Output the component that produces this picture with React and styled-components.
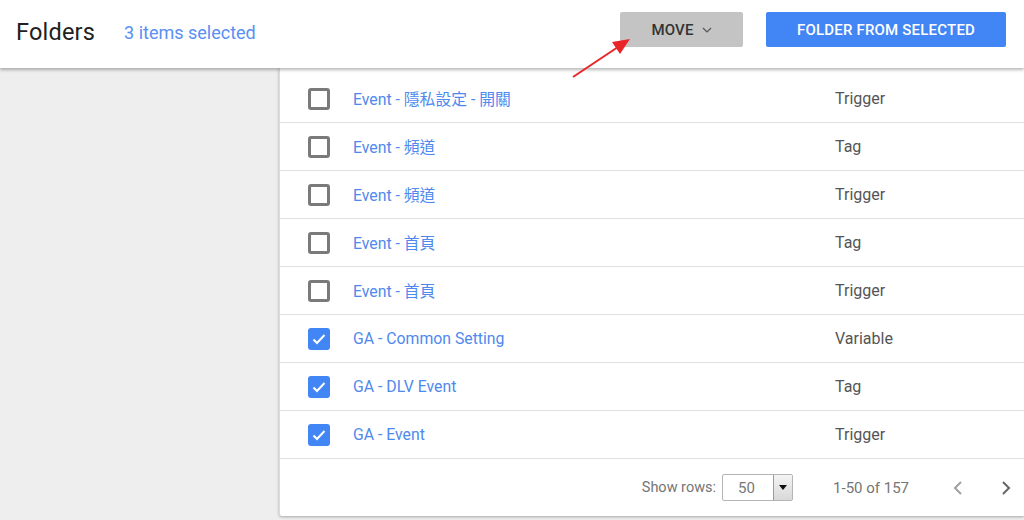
import React from "react";
import styled, { createGlobalStyle } from "styled-components";

const GlobalStyle = createGlobalStyle`
  html, body {
    margin: 0;
    padding: 0;
    background: #eeeeee;
    font-family: Roboto, "Noto Sans CJK TC", sans-serif;
  }
`;

const Page = styled.div`
  position: relative;
  width: 1024px;
  height: 520px;
  overflow: hidden;
  background: #eeeeee;
`;

const Header = styled.header`
  position: relative;
  z-index: 2;
  height: 68px;
  background: #fff;
  box-shadow: 0 2px 3px rgba(0, 0, 0, 0.28);
  display: flex;
  align-items: center;
  padding: 0 18px 4px 16px;
  box-sizing: border-box;
`;

const Title = styled.h1`
  margin: 0;
  font-size: 23.5px;
  font-weight: 400;
  color: #212121;
  letter-spacing: 0.2px;
`;

const Selected = styled.span`
  margin-left: 29px;
  font-size: 18px;
  color: #5a8ff2;
  flex: 1;
`;

const Button = styled.button`
  height: 35px;
  margin-bottom: 5px;
  border: none;
  border-radius: 2px;
  font-family: Roboto, sans-serif;
  font-size: 15px;
  font-weight: 500;
  letter-spacing: 0.2px;
  display: flex;
  align-items: center;
  justify-content: center;
  gap: 8px;
  width: ${(p) => p.width}px;
  background: ${(p) => (p.primary ? "#4285f4" : "#c4c4c4")};
  color: ${(p) => (p.primary ? "#fff" : "#333")};
  margin-left: ${(p) => p.gap || 0}px;
`;

const Body = styled.div`
  display: flex;
  height: calc(520px - 68px);
`;

const Sidebar = styled.div`
  width: 279px;
  flex-shrink: 0;
`;

const Card = styled.div`
  flex: 1;
  background: #fff;
  height: 448px;
  padding-top: 7px;
  box-sizing: border-box;
  border-left: 1px solid #dcdcdc;
  border-radius: 0 0 0 3px;
  box-shadow: 0 1px 3px rgba(0, 0, 0, 0.3);
  display: flex;
  flex-direction: column;
`;

const Row = styled.div`
  height: 48px;
  flex-shrink: 0;
  box-sizing: border-box;
  border-bottom: 1px solid #e0e0e0;
  display: flex;
  align-items: center;
  padding-left: 28px;
`;

const Box = styled.span`
  width: 22px;
  height: 22px;
  box-sizing: border-box;
  border-radius: 3px;
  border: ${(p) => (p.checked ? "none" : "3px solid #7a7a7a")};
  background: ${(p) => (p.checked ? "#4285f4" : "transparent")};
  display: flex;
  align-items: center;
  justify-content: center;
  flex-shrink: 0;
`;

const Name = styled.span`
  margin-left: 23px;
  width: 482px;
  font-size: 15.8px;
  color: #4f89ee;
`;

const Type = styled.span`
  font-size: 16px;
  color: #555;
`;

const Footer = styled.div`
  height: 58px;
  display: flex;
  align-items: center;
  justify-content: flex-end;
  padding-right: 2px;
  color: #757575;
  font-size: 15px;
`;

const Label = styled.span`
  font-size: 14.5px;
  margin-right: 6px;
`;

const Select = styled.div`
  width: 71px;
  height: 27px;
  box-sizing: border-box;
  border: 1px solid #b5b5b5;
  border-radius: 2px;
  display: flex;
  align-items: stretch;
`;

const SelectValue = styled.span`
  flex: 1;
  display: flex;
  align-items: center;
  padding-left: 15px;
  font-size: 15px;
  color: #777;
`;

const SelectBtn = styled.span`
  width: 18px;
  border-left: 1px solid #9a9a9a;
  background: linear-gradient(#f4f4f4, #d8d8d8);
  display: flex;
  align-items: center;
  justify-content: center;
  &::after {
    content: "";
    border-left: 4px solid transparent;
    border-right: 4px solid transparent;
    border-top: 5px solid #111;
  }
`;

const Range = styled.span`
  margin-left: 40px;
  margin-right: 33px;
`;

const Nav = styled.span`
  width: 32px;
  display: flex;
  justify-content: center;
  margin-left: ${(p) => p.gap || 0}px;
`;

const Arrow = styled.svg`
  position: absolute;
  left: 0;
  top: 0;
  z-index: 3;
  pointer-events: none;
`;

const rows = [
  ["Event - 隱私設定 - 開關", "Trigger", false],
  ["Event - 頻道", "Tag", false],
  ["Event - 頻道", "Trigger", false],
  ["Event - 首頁", "Tag", false],
  ["Event - 首頁", "Trigger", false],
  ["GA - Common Setting", "Variable", true],
  ["GA - DLV Event", "Tag", true],
  ["GA - Event", "Trigger", true],
];

const Chevron = ({ dir, color }) => (
  <svg width="12" height="16" viewBox="0 0 12 16">
    <path
      d={dir === "left" ? "M9 2 L3 8 L9 14" : "M3 2 L9 8 L3 14"}
      fill="none"
      stroke={color}
      strokeWidth="2"
    />
  </svg>
);

export default function App() {
  return (
    <Page>
      <GlobalStyle />
      <Header>
        <Title>Folders</Title>
        <Selected>3 items selected</Selected>
        <Button width={123}>
          MOVE
          <svg width="10" height="6" viewBox="0 0 10 6">
            <path d="M1 1 L5 5 L9 1" fill="none" stroke="#555" strokeWidth="1.2" />
          </svg>
        </Button>
        <Button primary width={240} gap={23}>
          FOLDER FROM SELECTED
        </Button>
      </Header>
      <Body>
        <Sidebar />
        <Card>
          {rows.map(([name, type, checked], i) => (
            <Row key={i}>
              <Box checked={checked}>
                {checked && (
                  <svg width="14" height="12" viewBox="0 0 14 12">
                    <path d="M1.5 6.5 L5 10 L12.5 2" fill="none" stroke="#fff" strokeWidth="2" />
                  </svg>
                )}
              </Box>
              <Name>{name}</Name>
              <Type>{type}</Type>
            </Row>
          ))}
          <Footer>
            <Label>Show rows:</Label>
            <Select>
              <SelectValue>50</SelectValue>
              <SelectBtn />
            </Select>
            <Range>1-50 of 157</Range>
            <Nav>
              <Chevron dir="left" color="#a0a0a0" />
            </Nav>
            <Nav gap={16}>
              <Chevron dir="right" color="#666" />
            </Nav>
          </Footer>
        </Card>
      </Body>
      <Arrow width="1024" height="520">
        <line x1="573" y1="77" x2="618" y2="47" stroke="#e8262a" strokeWidth="2" />
        <polygon points="630,39 612,42 620,54" fill="#e8262a" />
      </Arrow>
    </Page>
  );
}
